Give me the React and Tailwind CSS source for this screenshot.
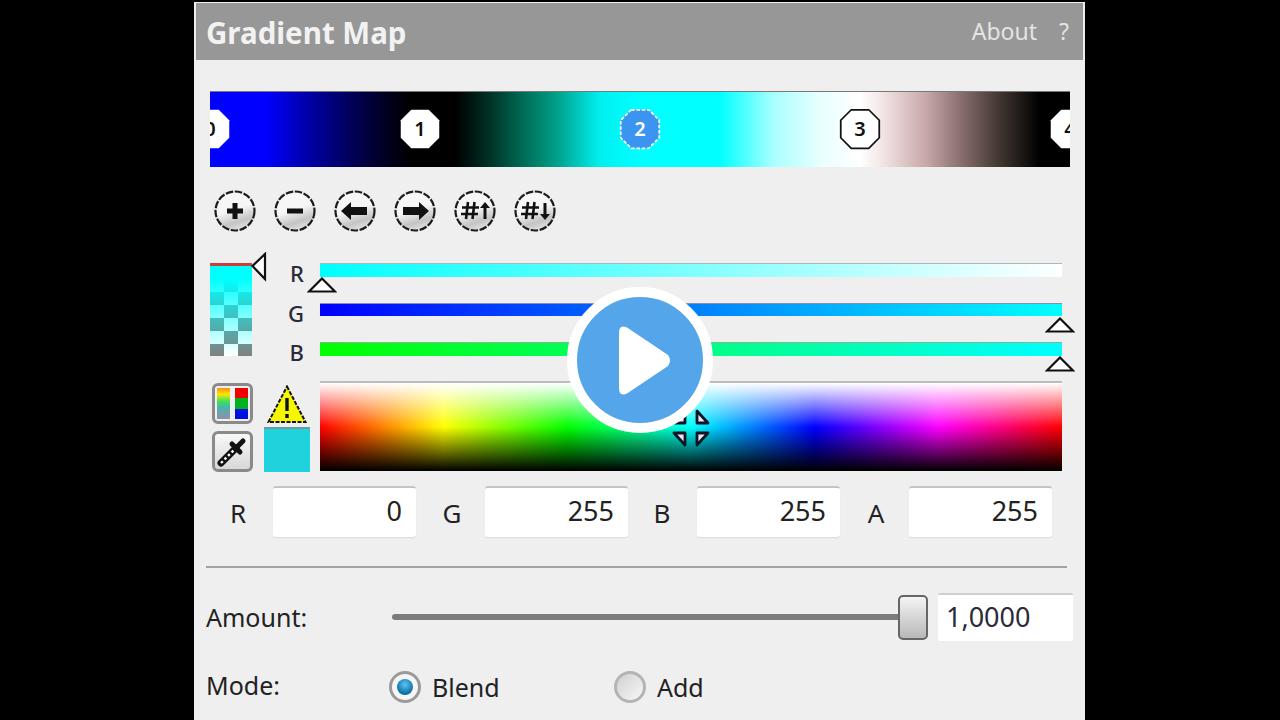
import React from 'react';

const octagon = '6,0 16,0 22,6 22,16 16,22 6,22 0,16 0,6';

function Stop({ label, className, fill = '#ffffff', stroke = 'none', dash, textColor = 'text-[#111]' }) {
  return (
    <div className={`absolute top-[16px] flex h-[42px] w-[42px] items-center justify-center ${className}`}>
      <svg viewBox="-1 -1 24 24" className="absolute inset-0 h-full w-full">
        <polygon points={octagon} fill={fill} stroke={stroke} strokeWidth="1" strokeDasharray={dash} />
      </svg>
      <span className={`relative text-[20px] leading-none font-semibold ${textColor}`}>{label}</span>
    </div>
  );
}

function RoundButton({ children }) {
  return (
    <svg viewBox="0 0 42 42" className="h-[42px] w-[42px]">
      <defs>
        <linearGradient id="roundFill" x1="0.2" y1="0.1" x2="0.5" y2="1">
          <stop offset="0.45" stopColor="#f6f6f6" />
          <stop offset="0.8" stopColor="#c4c4c4" />
          <stop offset="1" stopColor="#dedede" />
        </linearGradient>
      </defs>
      <circle cx="21" cy="21" r="19.5" fill="url(#roundFill)" stroke="#1c1c1c" strokeWidth="2.2" strokeDasharray="7.5 1.6" />
      {children}
    </svg>
  );
}

function Hash() {
  return (
    <path d="M8 17.5h17M7 24h17M14 12l-2 17M20.5 12l-2 17" stroke="#111" strokeWidth="2.6" fill="none" />
  );
}

function Marker({ className }) {
  return (
    <svg viewBox="0 0 30 16" className={`absolute h-[16px] w-[30px] ${className}`}>
      <polygon points="15,1.5 28,14.5 2,14.5" fill="#ffffff" stroke="#111" strokeWidth="2.2" />
    </svg>
  );
}

function Field({ label, value, labelClass = '' }) {
  return (
    <div className="flex w-[212px] items-center">
      <span className={`w-[50px] pt-[3px] text-center text-[26px] leading-none text-[#222] ${labelClass}`}>{label}</span>
      <div className="ml-[10px] flex h-[51px] w-[143px] items-center justify-end rounded-[3px] border-t-2 border-[#c4c4c4] bg-white pr-[14px] pb-[4px] text-[27px] leading-none text-[#222] shadow-[0_1px_1px_#dcdcdc]">
        {value}
      </div>
    </div>
  );
}

export default function App() {
  return (
    <div className="flex h-[720px] w-[1280px] overflow-hidden bg-black pl-[194px] font-['Noto_Sans',sans-serif]">
      <div className="relative mt-[2px] h-[718px] w-[891px] bg-[#efefef]">
        <div className="mx-[2px] mt-[1px] flex h-[57px] items-center justify-between bg-[#979797] pr-[14px] pl-[10px]">
          <span className="pt-[3px] text-[29.5px] font-bold text-[#f2f2f2]">Gradient Map</span>
          <div className="flex items-center gap-[22px] text-[23px] text-[#e4e4e4]">
            <span>About</span>
            <span>?</span>
          </div>
        </div>

        <div className="px-[16px]">
          {/* gradient */}
          <div className="relative mt-[31px] h-[76px] w-[860px] overflow-hidden border-t border-[#777] bg-[linear-gradient(to_right,#0000ff_0px,#0000ff_55px,#000090_110px,#000030_165px,#000000_200px,#000000_245px,#002a20_275px,#006b55_313px,#00a08a_347px,#00f0f0_390px,#00ffff_430px,#00ffff_510px,#a8ffff_563px,#e8ffff_610px,#ffffff_650px,#f5e8e8_670px,#c8a8a8_716px,#8a7070_750px,#403530_790px,#000000_830px)]">
            <Stop label="0" className="left-[-21px]" />
            <Stop label="1" className="left-[189px]" />
            <Stop label="2" className="left-[409px]" fill="#3a94f0" stroke="#ffffff" dash="2 1" textColor="text-white" />
            <Stop label="3" className="left-[629px]" stroke="#111" />
            <Stop label="4" className="left-[839px]" />
          </div>

          {/* stop buttons */}
          <div className="mt-[23px] ml-[4px] flex gap-[18px]">
            <RoundButton>
              <path d="M21 13v16M13 21h16" stroke="#111" strokeWidth="5" />
            </RoundButton>
            <RoundButton>
              <path d="M13 21h16" stroke="#111" strokeWidth="5" />
            </RoundButton>
            <RoundButton>
              <path d="M7 21l10-9v5h16v8H17v5z" fill="#111" />
            </RoundButton>
            <RoundButton>
              <path d="M35 21l-10-9v5H9v8h16v5z" fill="#111" />
            </RoundButton>
            <RoundButton>
              <Hash />
              <path d="M31 12l5 6h-3.5v11h-3V18H26z" fill="#111" />
            </RoundButton>
            <RoundButton>
              <Hash />
              <path d="M31 30l5-6h-3.5V13h-3v11H26z" fill="#111" />
            </RoundButton>
          </div>

          {/* channel sliders */}
          <div className="mt-[31px] flex h-[93px]">
            <div className="relative h-[93px] w-[42px] border-t-[3px] border-[#c9403a] bg-[linear-gradient(#00ffff,#00ffff_14%,rgba(0,255,255,0)_100%),repeating-conic-gradient(#ffffff_0_25%,#808080_0_50%)] bg-[length:100%_100%,28px_26px]">
              <svg viewBox="0 0 16 30" className="absolute top-[-14px] left-[41px] h-[30px] w-[16px]">
                <polygon points="1.5,14 14,2 14,27" fill="#ffffff" stroke="#111" strokeWidth="2.2" />
              </svg>
            </div>
            <div className="mt-[-9px] flex w-[68px] flex-col items-end pr-[16px] text-[22px] leading-[39.5px] font-medium text-[#2a2a3a]">
              <span>R</span>
              <span>G</span>
              <span>B</span>
            </div>
            <div className="relative flex w-[742px] flex-col gap-[26px]">
              <div className="h-[14px] border-t border-[#a9b9b9] bg-[linear-gradient(to_right,#00ffff,#ffffff)]" />
              <div className="h-[14px] border-t border-[#8b8bb0] bg-[linear-gradient(to_right,#0000ff,#00ffff)]" />
              <div className="h-[14px] border-t border-[#8fb08f] bg-[linear-gradient(to_right,#00ff00,#00ffff)]" />
              <Marker className="top-[14px] left-[-13px]" />
              <Marker className="top-[54px] left-[725px]" />
              <Marker className="top-[93px] left-[725px]" />
            </div>
          </div>

          {/* colour picker */}
          <div className="mt-[25px] flex items-start">
            <div className="mt-[2px] ml-[2px] flex w-[41px] flex-col gap-[7px]">
              <div className="flex h-[41px] w-[41px] justify-between rounded-[6px] border-[3px] border-[#8a8a8a] bg-[#f0f0f0] px-[2px] py-[2px]">
                <div className="h-full w-[13px] bg-[linear-gradient(#ff8c1a,#ffe600_20%,#33e060_45%,#50b0b0_65%,#9090a8)]" />
                <div className="flex h-full w-[13px] flex-col">
                  <div className="flex-1 bg-[#f00000]" />
                  <div className="flex-1 bg-[#00b020]" />
                  <div className="flex-1 bg-[#0010e0]" />
                </div>
              </div>
              <div className="flex h-[41px] w-[41px] items-center justify-center rounded-[6px] border-[3px] border-[#8a8a8a] bg-[linear-gradient(#f8f8f8,#d8d8d8)]">
                <svg viewBox="0 0 35 35" className="h-[35px] w-[35px]">
                  <path d="M6 29L21 14" stroke="#111" strokeWidth="7" strokeLinecap="round" />
                  <path d="M6 29L21 14" stroke="#ffffff" strokeWidth="2.4" strokeDasharray="2.5 2.5" />
                  <path d="M17 10l8 8M23 12l5-5" stroke="#111" strokeWidth="5" strokeLinecap="round" />
                </svg>
              </div>
            </div>
            <div className="ml-[11px] flex w-[46px] flex-col items-center">
              <svg viewBox="0 0 40 38" className="mt-[4px] h-[38px] w-[40px]">
                <polygon points="20,1.5 38.5,37 1.5,37" fill="#f6f600" stroke="#111" strokeWidth="2" strokeDasharray="4 1.5" />
                <path d="M20 13v13" stroke="#111" strokeWidth="3.4" />
                <path d="M20 29v4" stroke="#111" strokeWidth="3.4" />
              </svg>
              <div className="mt-[4px] h-[45px] w-[46px] border-t-2 border-[#6c9a9e] bg-[#1fd2dc]" />
            </div>
            <div className="ml-[10px] h-[90px] w-[742px] border-t-2 border-[#bdbdbd] bg-[linear-gradient(to_bottom,#ffffff_0%,rgba(255,255,255,0)_50%,rgba(0,0,0,0)_50%,#000000_100%),linear-gradient(to_right,#ff0000,#ffff00,#00ff00,#00ffff,#0000ff,#ff00ff,#ff0000)]" />
          </div>

          {/* values */}
          <div className="mt-[14px] ml-[3px] flex">
            <Field label="R" value="0" />
            <Field label="G" value="255" labelClass="pl-[4px]" />
            <Field label="B" value="255" />
            <Field label="A" value="255" labelClass="pl-[4px]" />
          </div>

          <div className="mt-[29px] ml-[-4px] h-[2px] w-[861px] bg-[#a2a2a2]" />

          {/* amount */}
          <div className="mt-[25px] ml-[-4px] flex h-[48px] items-center">
            <span className="w-[186px] shrink-0 text-[25px] leading-none text-[#222]">Amount:</span>
            <div className="relative h-[48px] w-[536px] shrink-0">
              <div className="absolute top-[21px] left-0 h-[6px] w-[510px] rounded-full bg-[#7c7c7c]" />
              <div className="absolute top-[2px] left-[506px] h-[45px] w-[30px] rounded-[5px] border-2 border-[#666] bg-[linear-gradient(#f4f4f4,#b8b8b8)]" />
            </div>
            <div className="ml-[10px] flex h-[48px] w-[135px] shrink-0 items-center rounded-[2px] border-t-2 border-[#cfcfcf] bg-white pb-[4px] pl-[8px] text-[27px] leading-none text-[#2a2a3a]">
              1,0000
            </div>
          </div>

          {/* mode */}
          <div className="mt-[30px] ml-[-4px] flex h-[32px] items-center text-[25px] leading-none text-[#222]">
            <span className="w-[183px] pb-[4px]">Mode:</span>
            <div className="flex h-[32px] w-[32px] items-center justify-center rounded-full border-[3px] border-[#9a9a9a] bg-[#f6f6f6]">
              <div className="h-[16px] w-[16px] rounded-full bg-[radial-gradient(circle_at_50%_35%,#5cc6f0,#0a6ea8_70%,#064a78)]" />
            </div>
            <span className="ml-[11px] w-[182px]">Blend</span>
            <div className="h-[32px] w-[32px] rounded-full border-[3px] border-[#b4b4b4] bg-[linear-gradient(135deg,#d0d0d0,#f8f8f8)]" />
            <span className="ml-[11px]">Add</span>
          </div>
        </div>

        {/* cursor over spectrum */}
        <svg viewBox="0 0 40 40" className="absolute top-[406px] left-[477px] h-[40px] w-[40px]">
          <g fill="#efe4f0" stroke="#0c1626" strokeWidth="2.8" strokeLinejoin="round">
            <polygon points="26,3 26,15 37,15" />
            <polygon points="14,3 14,15 3,15" />
            <polygon points="26,25 37,25 26,37" />
            <polygon points="14,25 3,25 14,37" />
          </g>
        </svg>

        {/* video play overlay */}
        <div className="absolute top-[285px] left-[373px] flex h-[146px] w-[146px] items-center justify-center rounded-full border-[10px] border-white bg-[#55a5ea]">
          <svg viewBox="0 0 52 69" className="ml-[10px] h-[69px] w-[52px]">
            <path d="M8 1.5L49 29Q53 34.5 49 40L8 67.5Q0 71 0 62V7Q0 -2 8 1.5Z" fill="#ffffff" />
          </svg>
        </div>
      </div>
    </div>
  );
}
